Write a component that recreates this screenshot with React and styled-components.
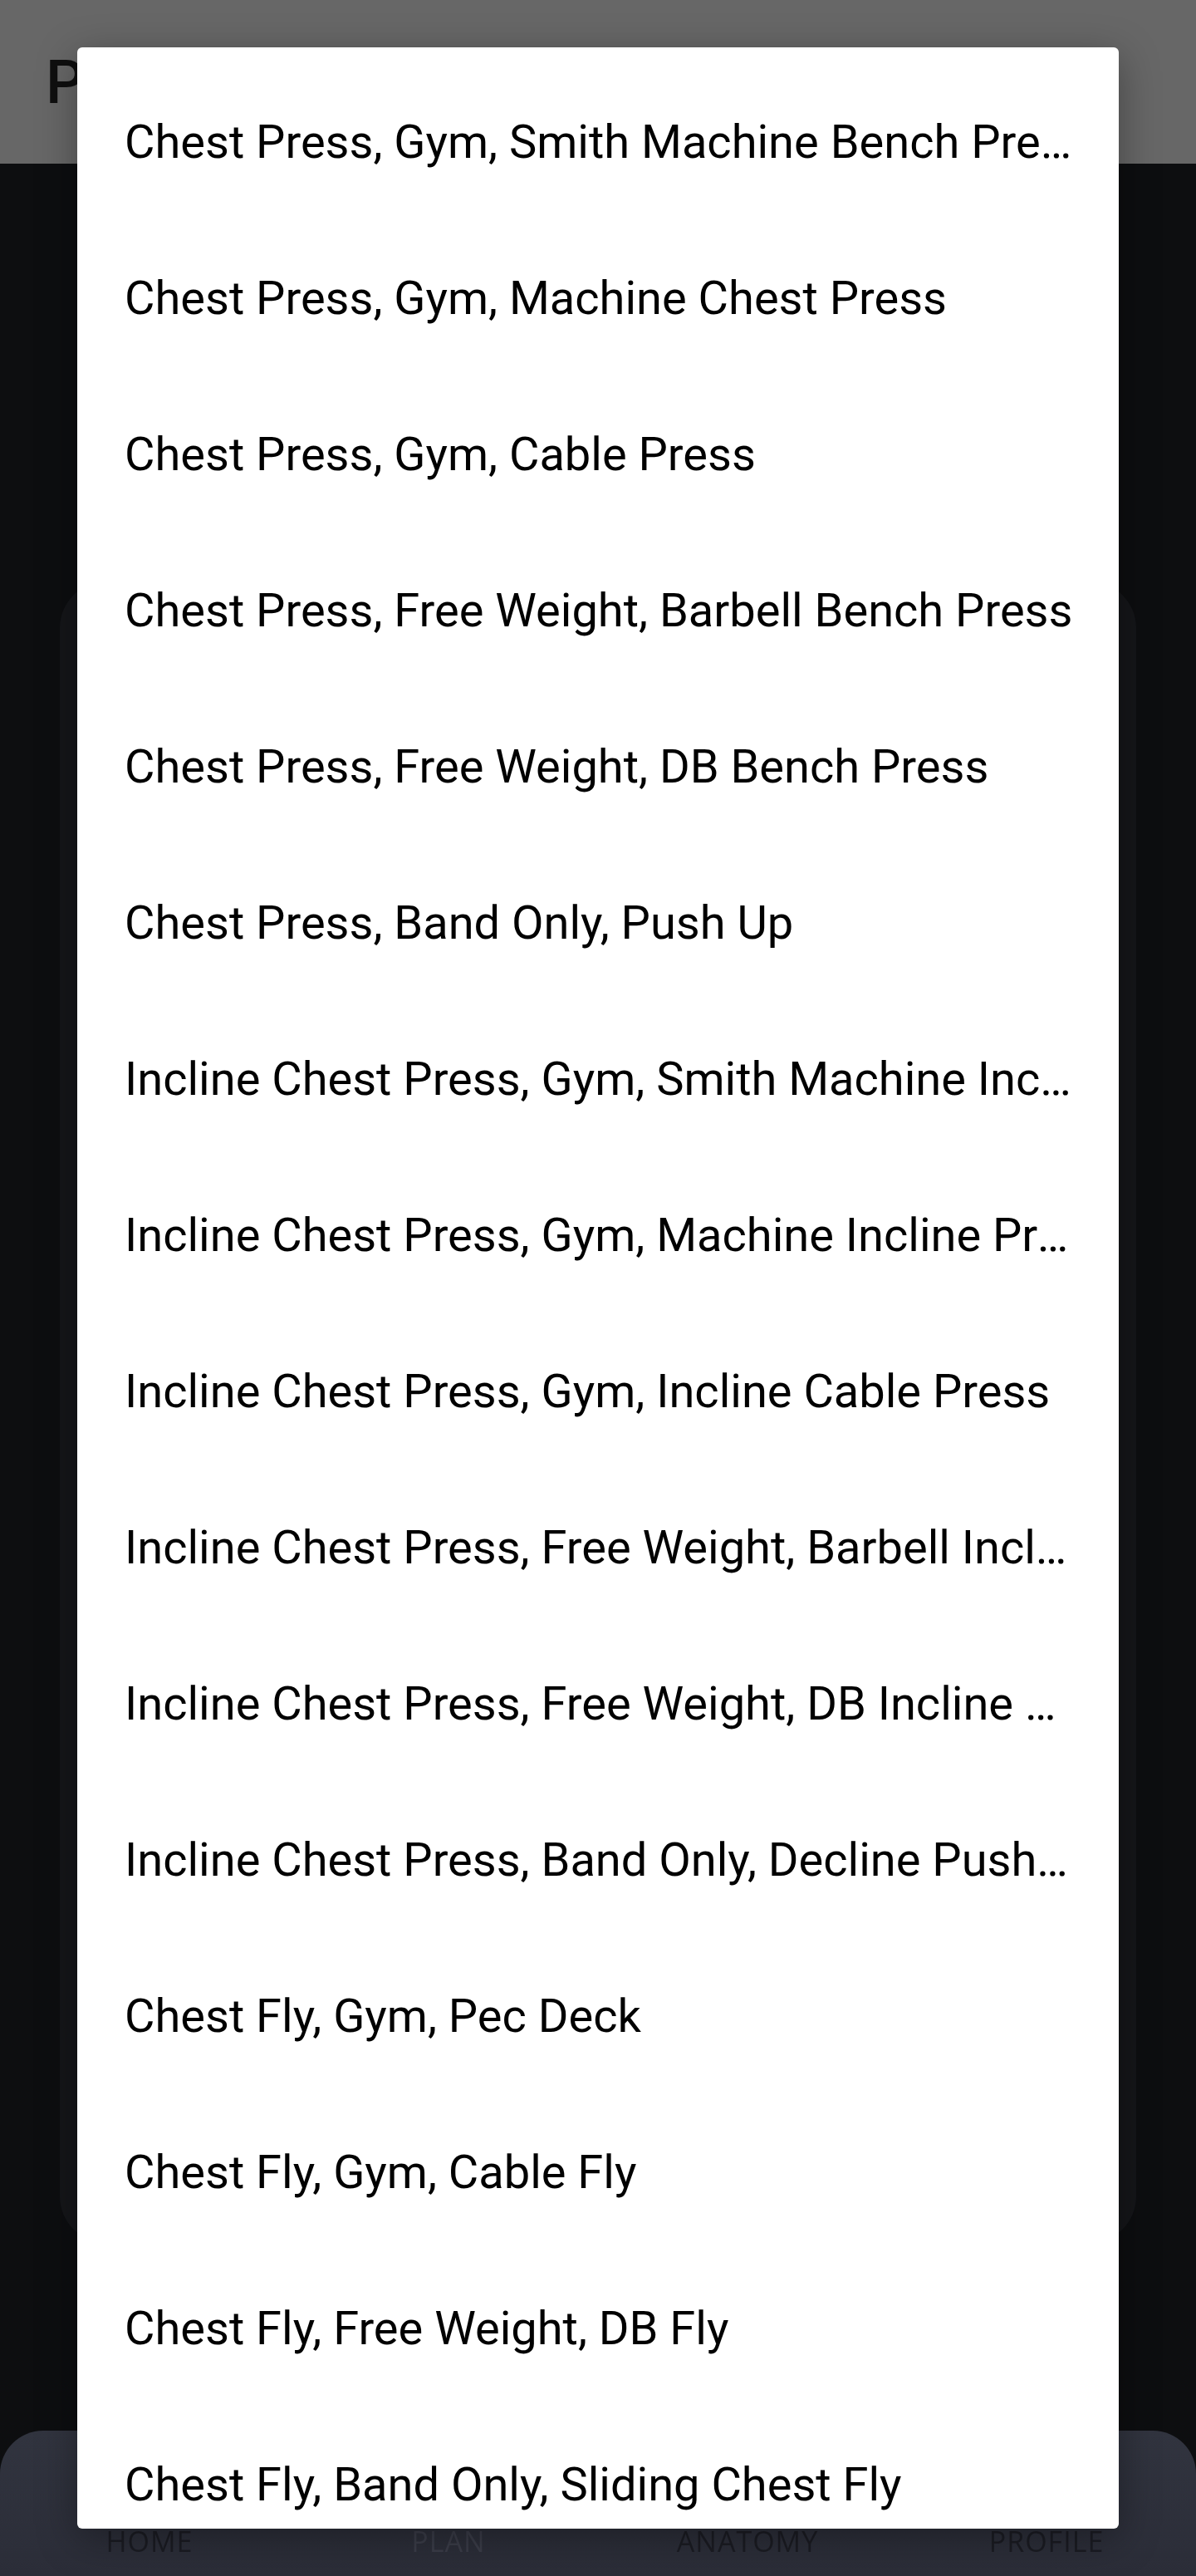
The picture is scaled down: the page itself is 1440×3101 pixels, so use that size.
import React from "react";
import styled, { createGlobalStyle } from "styled-components";

const GlobalStyle = createGlobalStyle`
  html, body {
    margin: 0;
    padding: 0;
    background: #0d0e10;
  }
  * {
    box-sizing: border-box;
  }
`;

const exercises = [
  "Chest Press, Gym, Smith Machine Bench Press",
  "Chest Press, Gym, Machine Chest Press",
  "Chest Press, Gym, Cable Press",
  "Chest Press, Free Weight, Barbell Bench Press",
  "Chest Press, Free Weight, DB Bench Press",
  "Chest Press, Band Only, Push Up",
  "Incline Chest Press, Gym, Smith Machine Incline Press",
  "Incline Chest Press, Gym, Machine Incline Press",
  "Incline Chest Press, Gym, Incline Cable Press",
  "Incline Chest Press, Free Weight, Barbell Incline Press",
  "Incline Chest Press, Free Weight, DB Incline Press",
  "Incline Chest Press, Band Only, Decline Push Up",
  "Chest Fly, Gym, Pec Deck",
  "Chest Fly, Gym, Cable Fly",
  "Chest Fly, Free Weight, DB Fly",
  "Chest Fly, Band Only, Sliding Chest Fly",
];

const tabs = [
  { label: "HOME", active: false },
  { label: "PLAN", active: true },
  { label: "ANATOMY", active: false },
  { label: "PROFILE", active: false },
];

const Screen = styled.div`
  position: relative;
  width: 1440px;
  height: 3101px;
  display: flex;
  flex-direction: column;
  background: #0d0e10;
  overflow: hidden;
  font-family: Roboto, "Noto Sans", sans-serif;
`;

const Header = styled.header`
  height: 197px;
  flex-shrink: 0;
  display: flex;
  align-items: center;
  padding-left: 55px;
  background: #676767;
`;

const Title = styled.h1`
  margin: 0;
  font-size: 73px;
  font-weight: 500;
  color: #0f0f0f;
`;

const Body = styled.main`
  flex: 1;
  padding: 503px 72px 0;
`;

const Card = styled.section`
  height: 2000px;
  border-radius: 56px;
  background: #151619;
`;

const NavBar = styled.nav`
  height: 175px;
  flex-shrink: 0;
  display: grid;
  grid-template-columns: repeat(4, 1fr);
  align-items: end;
  padding-bottom: 19px;
  border-radius: 52px 52px 0 0;
  background: linear-gradient(180deg, #31343f 0%, #2b2d38 100%);
`;

const NavLabel = styled.span`
  justify-self: center;
  font-family: "Open Sans", Lato, sans-serif;
  font-size: 34px;
  letter-spacing: 1px;
  color: ${(p) => (p.$active ? "#3c3e4a" : "#1b1c23")};
  filter: blur(0.6px);
`;

const Dialog = styled.div`
  position: absolute;
  top: 57px;
  left: 93px;
  width: 1254px;
  height: 2987px;
  padding-top: 20px;
  border-radius: 6px;
  background: #ffffff;
  overflow: hidden;
  box-shadow: 0 12px 48px rgba(0, 0, 0, 0.35);
`;

const Option = styled.div`
  height: 188px;
  line-height: 188px;
  padding: 0 55px 0 57px;
  font-family: Roboto, "Noto Sans", sans-serif;
  font-size: 56px;
  color: #000000;
  white-space: nowrap;
  overflow: hidden;
  text-overflow: ellipsis;
`;

export default function App() {
  return (
    <>
      <GlobalStyle />
      <Screen>
        <Header>
          <Title>Plan</Title>
        </Header>
        <Body>
          <Card />
        </Body>
        <NavBar>
          {tabs.map((t) => (
            <NavLabel key={t.label} $active={t.active}>
              {t.label}
            </NavLabel>
          ))}
        </NavBar>
        <Dialog role="dialog">
          {exercises.map((name) => (
            <Option key={name}>{name}</Option>
          ))}
        </Dialog>
      </Screen>
    </>
  );
}
